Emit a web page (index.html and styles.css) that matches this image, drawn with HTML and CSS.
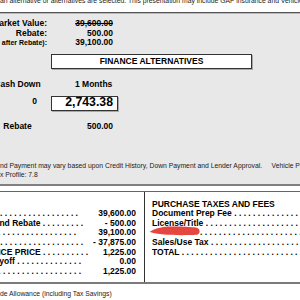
FILE: index.html
```html
<!DOCTYPE html>
<html lang="en">
<head>
<meta charset="utf-8">
<title>Finance Alternatives</title>
<link rel="stylesheet" href="styles.css">
</head>
<body>
<div class="top-note">an alternative or alternatives are selected. This presentation may include GAP insurance and Vehicle Service Contract options.</div>
<section class="panel">
  <div class="kv"><span class="k"><span>Market Value:</span></span><span class="v strike">39,600.00</span></div>
  <div class="kv"><span class="k"><span>Rebate:</span></span><span class="v">500.00</span></div>
  <div class="kv small"><span class="k"><span>(Net after Rebate):</span></span><span class="v">39,100.00</span></div>
  <div class="fin-title">FINANCE ALTERNATIVES</div>
  <div class="fin-row"><span class="c1"><span>Cash Down</span></span><span class="c2">1 Months</span></div>
  <div class="fin-row input-row"><span class="c0">0</span><span class="amount">2,743.38</span></div>
  <div class="fin-row"><span class="c1"><span>Rebate</span></span><span class="c3">500.00</span></div>
  <p class="foot first">nd Payment may vary based upon Credit History, Down Payment and Lender Approval.&nbsp;&nbsp;&nbsp;&nbsp; Vehicle Purchase Tax Profile</p>
  <p class="foot">x Profile: 7.8</p>
</section>
<section class="summary">
  <div class="col left">
    <div class="line"><span class="lead"><span>Selling Price . . . . . . . . . . . . . . . . . . . . . . . .</span></span><span class="amt">39,600.00</span></div>
    <div class="line"><span class="lead"><span>Less Trade and Rebate . . . . . . . . .</span></span><span class="amt">- 500.00</span></div>
    <div class="line"><span class="lead"><span>Net Price . . . . . . . . . . . . . . . . . . . . . . . .</span></span><span class="amt">39,100.00</span></div>
    <div class="line"><span class="lead"><span>Trade Allowance . . . . . . . . . . . . . . . . . . . . . . . .</span></span><span class="amt">- 37,875.00</span></div>
    <div class="line"><span class="lead"><span>DIFFERENCE PRICE . . . . . . . . . .</span></span><span class="amt">1,225.00</span></div>
    <div class="line"><span class="lead"><span>Trade Payoff . . . . . . . . . . . . . .</span></span><span class="amt">0.00</span></div>
    <div class="line"><span class="lead"><span>Amount Due . . . . . . . . . . . . . . . . . . . . . . . .</span></span><span class="amt">1,225.00</span></div>
  </div>
  <div class="col right">
    <div class="head">PURCHASE TAXES AND FEES</div>
    <div class="tline">Document Prep Fee . . . . . . . . . . . . . . . . . . . . . . . . . . . . . .</div>
    <div class="tline">License/Title . . . . . . . . . . . . . . . . . . . . . . . . . . . . . . . . .</div>
    <div class="tline"><svg class="redact" width="50" height="9" viewBox="0 0 50 9" aria-hidden="true"><path d="M0,3.6 C4,1.4 10,-1 18,-1.4 C28,-1.8 40,-1 46,-0.6 C50.5,-0.2 51,6.2 46.5,6.8 C36,7.4 22,7.2 14,6.6 C8,6.1 3,5 0,4 Z"/></svg>. . . . . . . . . . . . . . . . . . . . . . .</div>
    <div class="tline">Sales/Use Tax . . . . . . . . . . . . . . . . . . . . . . . . . . . . . . . .</div>
    <div class="tline">TOTAL . . . . . . . . . . . . . . . . . . . . . . . . . . . . . . . . . . . .</div>
  </div>
</section>
<p class="foot note">de Allowance (including Tax Savings)</p>
</body>
</html>
```
FILE: styles.css
```css
html, body {
  margin: 0;
  padding: 0;
}
body {
  width: 300px;
  height: 300px;
  overflow: hidden;
  background: #ffffff;
  color: #000;
  font-family: "Liberation Sans", Arial, sans-serif;
}
.top-note {
  margin-top: -3px;
  font-size: 6.8px;
  line-height: 8px;
  white-space: nowrap;
  overflow: hidden;
  color: #222;
}
.panel {
  margin-top: 7px;
  background: #e8e8e8;
  border-top: 1px solid #555;
  border-bottom: 2px solid #808080;
  box-shadow: inset 0 1px 0 #b8b8b8;
  padding: 5px 0 5px 0;
  font-weight: bold;
  font-size: 8.5px;
}
.kv {
  display: flex;
  height: 10px;
  line-height: 10px;
  white-space: nowrap;
}
.kv .k {
  flex: none;
  width: 47px;
  min-width: 0;
  display: flex;
  justify-content: flex-end;
}
.kv .v {
  flex: none;
  width: 66px;
  text-align: right;
}
.kv.small {
  height: 9px;
  line-height: 9px;
}
.kv.small .k {
  font-size: 7px;
}
.strike {
  text-decoration: line-through;
}
.fin-title {
  margin: 7px 0 0 51px;
  width: 201px;
  height: 15px;
  box-sizing: border-box;
  border: 1px solid #333;
  background: #fff;
  box-shadow: 1px 1px 0 #a8a8a8;
  text-align: center;
  line-height: 13px;
}
.fin-row {
  display: flex;
  margin-top: 10px;
  height: 10px;
  line-height: 10px;
  white-space: nowrap;
}
.fin-row .c1 {
  flex: none;
  width: 35px;
  min-width: 0;
  display: flex;
  justify-content: center;
}
.fin-row .c2 {
  margin-left: 40px;
}
.fin-row .c3 {
  flex: none;
  width: 78px;
  text-align: right;
}
.input-row {
  margin-top: 7px;
  height: 15px;
  align-items: flex-start;
}
.input-row .c0 {
  flex: none;
  width: 37px;
  text-align: right;
}
.amount {
  flex: none;
  margin-left: 14px;
  width: 67px;
  height: 15px;
  box-sizing: border-box;
  border: 1px solid #333;
  background: #fff;
  box-shadow: 1px 1px 0 #a8a8a8;
  padding: 0 4px 2px 0;
  text-align: right;
  font-size: 12.3px;
  font-weight: bold;
  line-height: 11px;
}
.foot {
  margin: 0;
  font-size: 6.8px;
  line-height: 9px;
  font-weight: normal;
  white-space: nowrap;
  color: #222;
}
.foot.first {
  margin-top: 30px;
}
.summary {
  margin-top: 5px;
  border-top: 1px solid #666;
  border-bottom: 2px solid #7a7a7a;
  display: grid;
  grid-template-columns: 145px 1fr;
  font-weight: bold;
  font-size: 8.5px;
}
.col {
  box-sizing: border-box;
  white-space: nowrap;
  overflow: hidden;
}
.col.left {
  padding: 17px 8px 5px 0;
  border-right: 1px solid #333;
}
.col.right {
  padding: 7px 0 0 7px;
}
.line {
  display: flex;
  height: 9.7px;
  line-height: 9.7px;
}
.lead {
  flex: none;
  min-width: 0;
  display: flex;
  justify-content: flex-end;
}
.line .amt {
  flex: 1;
  text-align: right;
}
.line:nth-child(1) .lead { width: 78px; }
.line:nth-child(2) .lead { width: 83px; }
.line:nth-child(3) .lead { width: 76px; }
.line:nth-child(4) .lead { width: 83px; }
.line:nth-child(5) .lead { width: 88px; }
.line:nth-child(6) .lead { width: 81px; }
.line:nth-child(7) .lead { width: 81px; }
.head {
  height: 10px;
  line-height: 10px;
}
.tline {
  height: 9.7px;
  line-height: 9.7px;
}
.redact {
  display: inline-block;
  vertical-align: top;
  overflow: visible;
  margin-left: -2px;
  fill: #e5463f;
}
.note {
  margin-top: 5px;
}
```
